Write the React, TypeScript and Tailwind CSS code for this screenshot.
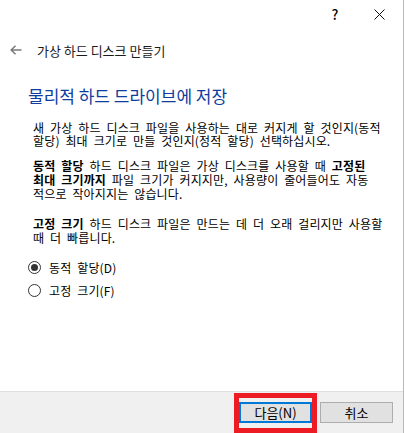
import React from "react";

const font = { fontFamily: '"Noto Sans CJK KR", "Noto Sans", sans-serif' };

function Radio({ checked, label }: { checked?: boolean; label: string }) {
  return (
    <div className="flex items-center h-[23px]">
      <div className="w-[13px] h-[13px] rounded-full border border-[#333333] bg-white flex items-center justify-center">
        {checked && <div className="w-[7px] h-[7px] rounded-full bg-[#333333]" />}
      </div>
      <span className="ml-[8px] text-[12px] leading-[13px] tracking-[0.15px] [word-spacing:3px] text-black whitespace-nowrap">
        {label}
      </span>
    </div>
  );
}

export default function App() {
  return (
    <div className="w-[405px] h-[433px] flex flex-row bg-white overflow-hidden" style={font}>
      <div className="w-[403px] h-full flex flex-col">
        {/* title bar */}
        <div className="h-[28px] flex items-center justify-end pr-[14px]">
          <span className="w-[20px] text-center text-[14px] text-black leading-none font-medium">?</span>
          <div className="w-[20px] ml-[24px] flex items-center justify-center">
            <svg width="11" height="11" viewBox="0 0 11 11">
              <path d="M0.5 0.5 L10.5 10.5 M10.5 0.5 L0.5 10.5" stroke="#111" strokeWidth="1" />
            </svg>
          </div>
        </div>
        {/* header */}
        <div className="mt-[10px] h-[24px] flex items-center pl-[10px]">
          <svg width="12" height="10" viewBox="0 0 12 10">
            <path d="M11.5 5 H1.2 M5.5 0.8 L1.2 5 L5.5 9.2" stroke="#7a7a7a" strokeWidth="1.5" fill="none" />
          </svg>
          <span className="ml-[15px] text-[13px] text-[#1a1a1a] leading-none whitespace-nowrap">
            가상 하드 디스크 만들기
          </span>
        </div>
        {/* main */}
        <div className="flex-1 flex flex-col pl-[28px]">
          <div className="mt-[23px] h-[22px] flex items-center text-[17px] text-[#0f3d9e] whitespace-nowrap">
            물리적 하드 드라이브에 저장
          </div>
          <div className="pl-[5px] text-[12px] tracking-[0.15px] [word-spacing:3px] text-black whitespace-nowrap">
            <p className="mt-[14px] leading-[13px]">
              새 가상 하드 디스크 파일을 사용하는 대로 커지게 할 것인지(동적
              <br />
              할당) 최대 크기로 만들 것인지(정적 할당) 선택하십시오.
            </p>
            <p className="mt-[12px] leading-[14px]">
              <b>동적 할당</b> 하드 디스크 파일은 가상 디스크를 사용할 때 <b>고정된</b>
              <br />
              <b>최대 크기까지</b> 파일 크기가 커지지만, 사용량이 줄어들어도 자동
              <br />
              적으로 작아지지는 않습니다.
            </p>
            <p className="mt-[16px] leading-[14px]">
              <b>고정 크기</b> 하드 디스크 파일은 만드는 데 더 오래 걸리지만 사용할
              <br />
              때 더 빠릅니다.
            </p>
          </div>
          <div className="mt-[11px] flex flex-col">
            <Radio checked label="동적 할당(D)" />
            <Radio label="고정 크기(F)" />
          </div>
        </div>
        {/* footer */}
        <div className="relative h-[42px] border-t border-[#dfdfdf] bg-[#f0f0f0] flex justify-end items-start pt-[10px] pr-[10px] gap-[8px]">
          <button className="w-[73px] h-[21px] border-2 border-[#0078d7] bg-[#e1e1e1] text-[13px] text-black leading-none flex items-center justify-center">
            다음(N)
          </button>
          <button className="w-[73px] h-[21px] border border-[#adadad] bg-[#e1e1e1] text-[13px] text-black leading-none flex items-center justify-center">
            취소
          </button>
          <div className="absolute left-[234px] top-[1px] w-[83px] h-[40px] border-[5px] border-[#ed1c24] pointer-events-none" />
        </div>
      </div>
      <div className="w-px h-full bg-[#b9b9b9]" />
      <div className="w-px h-full bg-white" />
    </div>
  );
}
